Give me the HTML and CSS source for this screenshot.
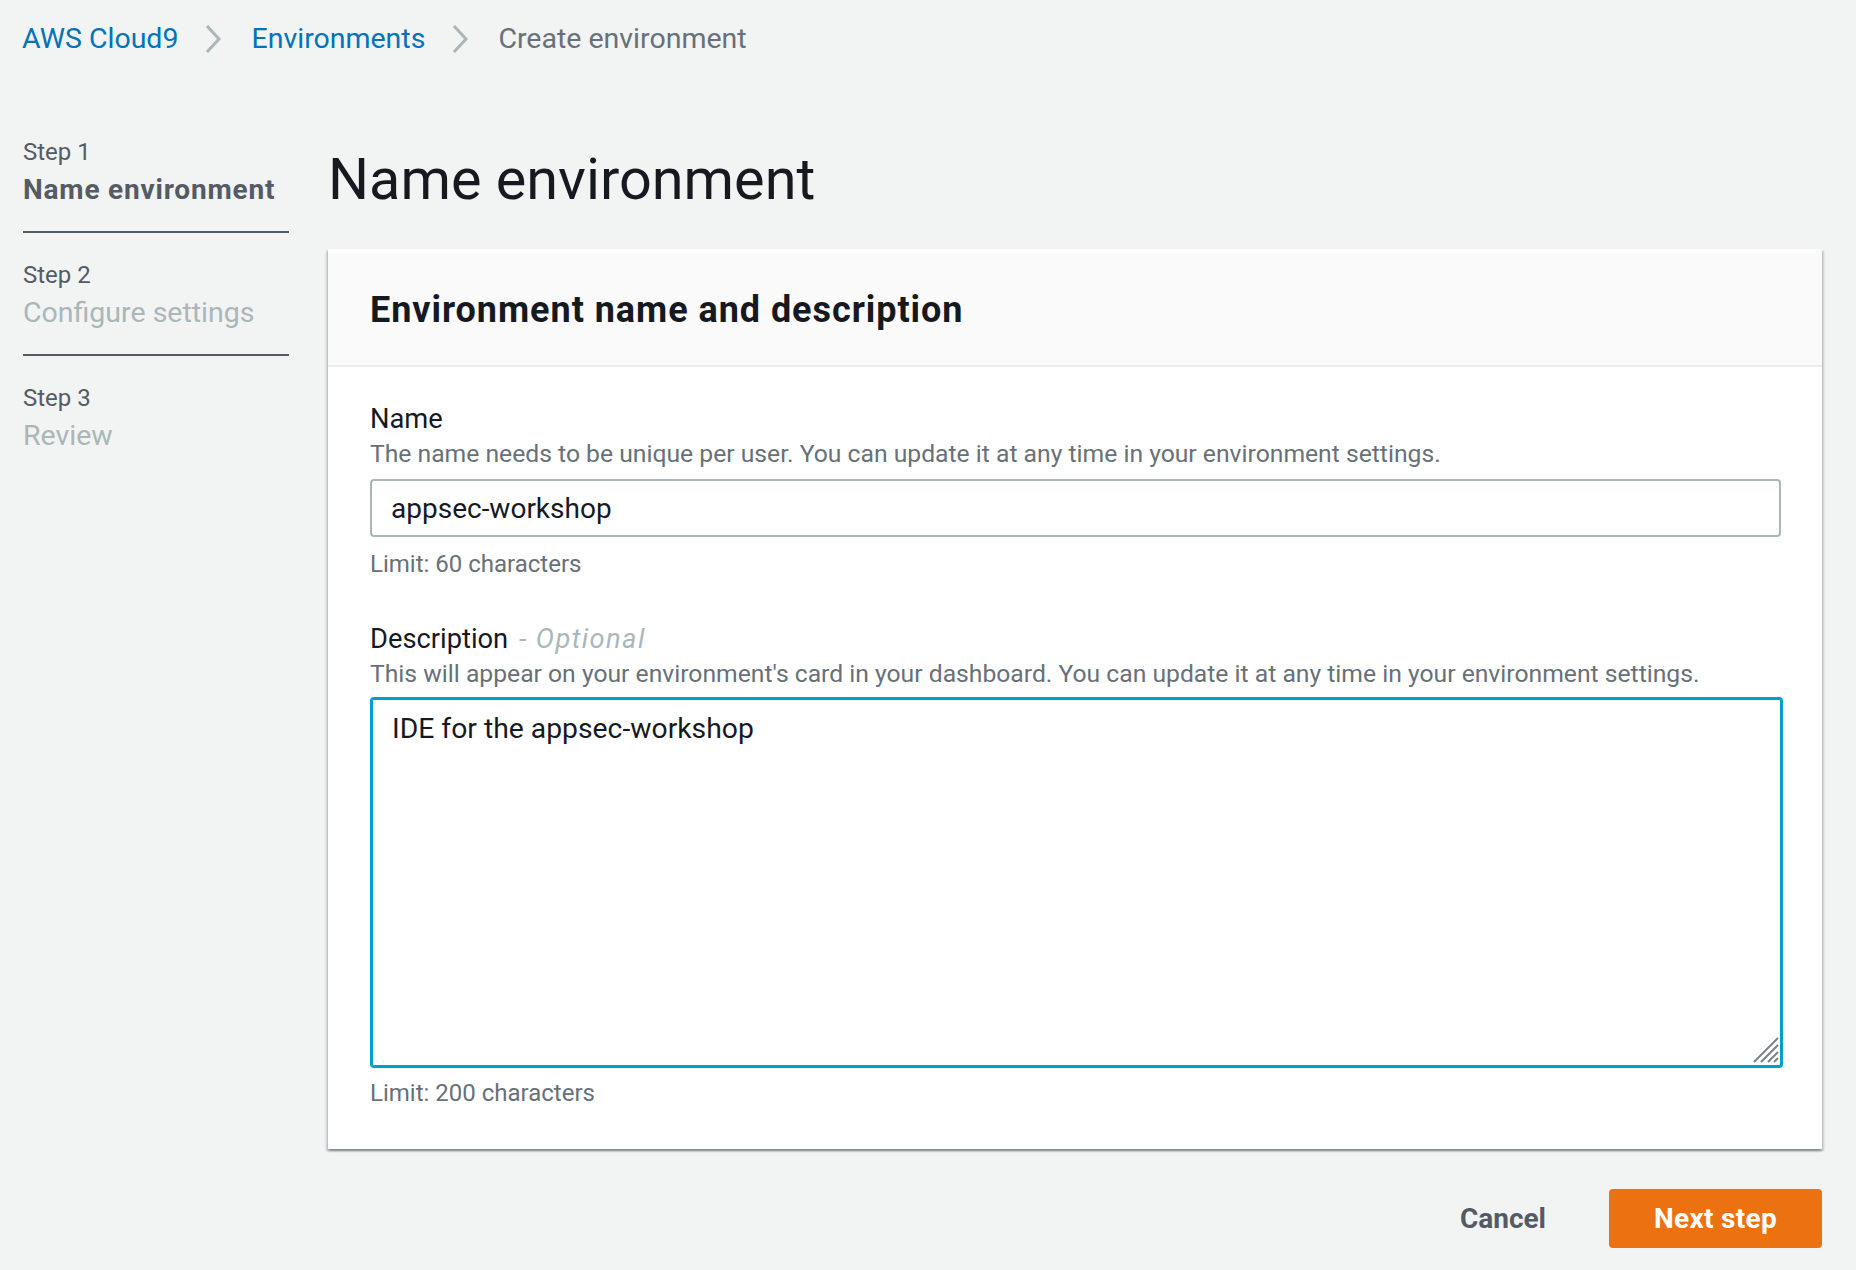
FILE: index.html
```html
<!DOCTYPE html>
<html lang="en">
<head>
<meta charset="utf-8">
<title>Create environment</title>
<link rel="stylesheet" href="styles.css">
</head>
<body>
<div class="page">
  <nav class="breadcrumbs">
    <a class="crumb link" href="#">AWS Cloud9</a>
    <svg class="chev" viewBox="0 0 18 30" width="18" height="30"><path d="M3 2 L15 15 L3 28" fill="none" stroke="#aab7b8" stroke-width="3"/></svg>
    <a class="crumb link" href="#">Environments</a>
    <svg class="chev" viewBox="0 0 18 30" width="18" height="30"><path d="M3 2 L15 15 L3 28" fill="none" stroke="#aab7b8" stroke-width="3"/></svg>
    <span class="crumb current">Create environment</span>
  </nav>

  <div class="layout">
    <aside class="steps">
      <div class="step active">
        <div class="step-num">Step 1</div>
        <div class="step-title">Name environment</div>
      </div>
      <div class="step">
        <div class="step-num">Step 2</div>
        <div class="step-title">Configure settings</div>
      </div>
      <div class="step last">
        <div class="step-num">Step 3</div>
        <div class="step-title">Review</div>
      </div>
    </aside>

    <main class="content">
      <h1 class="page-title">Name environment</h1>
      <section class="card">
        <div class="card-header">
          <h2 class="card-title">Environment name and description</h2>
        </div>
        <div class="card-body">
          <div class="field">
            <label class="field-label">Name</label>
            <div class="field-desc">The name needs to be unique per user. You can update it at any time in your environment settings.</div>
            <input class="text-input" type="text" value="appsec-workshop">
            <div class="field-limit">Limit: 60 characters</div>
          </div>
          <div class="field second">
            <label class="field-label">Description <span class="optional">- Optional</span></label>
            <div class="field-desc">This will appear on your environment's card in your dashboard. You can update it at any time in your environment settings.</div>
            <div class="textarea-wrap">
              <textarea class="text-area">IDE for the appsec-workshop</textarea>
              <svg class="grip" viewBox="0 0 26 26" width="26" height="26">
                <path d="M25 1 L1 25 M25 8 L8 25 M25 15 L15 25 M25 21 L21 25" stroke="#7d8184" stroke-width="2" fill="none"/>
              </svg>
            </div>
            <div class="field-limit">Limit: 200 characters</div>
          </div>
        </div>
      </section>
      <div class="actions">
        <button class="btn-link" type="button">Cancel</button>
        <button class="btn-primary" type="button">Next step</button>
      </div>
    </main>
  </div>
</div>
</body>
</html>
```
FILE: styles.css
```css
html, body {
  margin: 0;
  padding: 0;
}
body {
  background: #f2f3f3;
  font-family: Roboto, "Open Sans", "Liberation Sans", sans-serif;
  color: #16191f;
}
.page {
  padding: 19px 34px 0 22px;
}

/* breadcrumbs */
.breadcrumbs {
  display: flex;
  align-items: center;
  height: 40px;
  font-size: 28.5px;
  line-height: 40px;
}
.crumb {
  text-decoration: none;
  white-space: nowrap;
}
.crumb.link { color: #0073bb; }
.crumb.current { color: #687078; }
.chev {
  display: block;
  margin: 0 29px 0 26px;
}

/* layout */
.layout {
  display: grid;
  grid-template-columns: 267px 1fr;
  column-gap: 39px;
  margin-top: 77px;
}

/* steps */
.steps {
  padding-left: 1px;
}
.step {
  padding: 26px 0 23px;
  border-bottom: 2px solid #545b64;
}
.step:first-child { padding-top: 0; }
.step.last { border-bottom: none; }
.step-num {
  font-size: 24px;
  line-height: 32px;
  color: #545b64;
}
.step-title {
  margin-top: 4px;
  font-size: 28.5px;
  line-height: 36px;
  color: #aab7b8;
}
.step.active .step-title {
  color: #545b64;
  font-weight: 700;
  font-size: 28px;
  letter-spacing: 0.8px;
}

/* content */
.page-title {
  margin: 10px 0 35px;
  font-size: 57.6px;
  line-height: 68px;
  font-weight: 400;
  color: #16191f;
}
.card {
  background: #fff;
  box-shadow: 0 2px 2px 0 rgba(0, 28, 36, 0.3), 2px 2px 2px 0 rgba(0, 28, 36, 0.15), -2px 2px 2px 0 rgba(0, 28, 36, 0.15);
}
.card-header {
  background: #fafafa;
  border-bottom: 2px solid #eaeded;
  padding: 39px 42px 33px;
}
.card-title {
  margin: 0;
  font-size: 36px;
  line-height: 44px;
  font-weight: 700;
  letter-spacing: 0.95px;
  color: #16191f;
}
.card-body {
  padding: 35px 41px 40px 42px;
}
.field.second {
  margin-top: 42px;
}
.field-label {
  display: block;
  font-size: 27.3px;
  line-height: 35px;
  color: #16191f;
}
.optional {
  margin-left: 4px;
  color: #aab7b8;
  font-style: italic;
  letter-spacing: 1.4px;
}
.field-desc {
  margin-top: 1px;
  font-size: 24.7px;
  line-height: 32px;
  color: #687078;
}
.field-limit {
  margin-top: 11px;
  font-size: 24px;
  line-height: 32px;
  color: #687078;
}
.textarea-wrap + .field-limit {
  margin-top: 9px;
}
.text-input {
  display: block;
  box-sizing: border-box;
  width: 100%;
  height: 58px;
  margin-top: 9px;
  padding: 0 19px;
  border: 2px solid #aab7b8;
  border-radius: 4px;
  background: #fff;
  font-family: inherit;
  font-size: 28px;
  color: #16191f;
  outline: none;
}
.textarea-wrap {
  position: relative;
  margin-top: 7px;
}
.text-area {
  display: block;
  box-sizing: border-box;
  width: calc(100% + 2px);
  height: 371px;
  padding: 9px 19px;
  border: 3px solid #00a1c9;
  border-radius: 4px;
  background: #fff;
  font-family: inherit;
  font-size: 28.3px;
  line-height: 40px;
  color: #16191f;
  outline: none;
  resize: none;
}
.grip {
  position: absolute;
  right: 2px;
  bottom: 5px;
}

/* actions */
.actions {
  display: flex;
  justify-content: flex-end;
  align-items: center;
  gap: 63px;
  margin-top: 40px;
}
.btn-link {
  border: none;
  background: none;
  padding: 0;
  font-family: inherit;
  font-size: 28px;
  font-weight: 700;
  color: #545b64;
}
.btn-primary {
  width: 213px;
  height: 59px;
  border: none;
  border-radius: 4px;
  background: #ec7211;
  color: #fff;
  font-family: inherit;
  font-size: 28px;
  font-weight: 700;
  letter-spacing: 0.3px;
}
```
